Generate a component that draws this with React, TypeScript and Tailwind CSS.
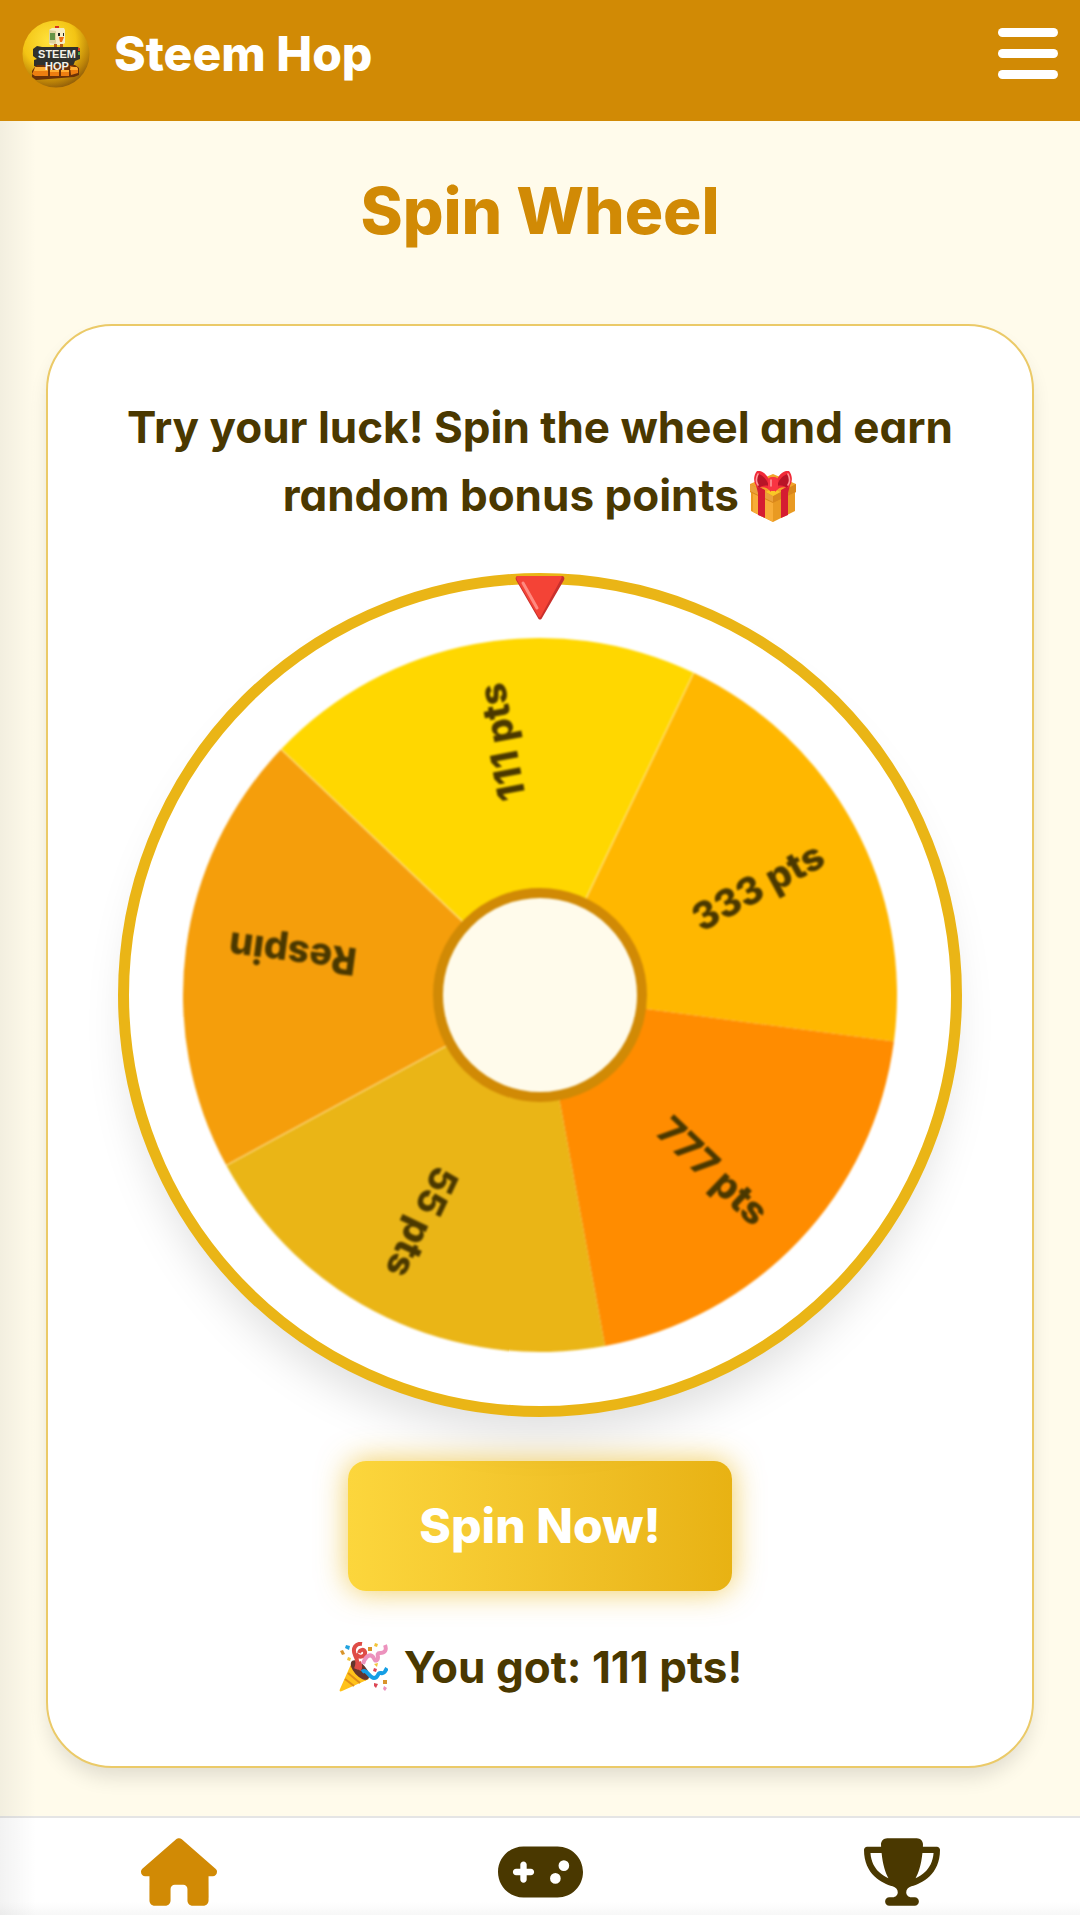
import React from "react";
import { FaHouse, FaGamepad, FaTrophy } from "react-icons/fa6";

const segments = [
  { label: "111 pts", color: "#ffd700" },
  { label: "333 pts", color: "#ffb700" },
  { label: "777 pts", color: "#ff8c00" },
  { label: "55 pts", color: "#eab516" },
  { label: "Respin", color: "#f59e0b" },
];

const START = -136.5;
const STEP = 72;

function point(angle: number, r: number) {
  const a = (angle * Math.PI) / 180;
  return `${(411 + r * Math.cos(a)).toFixed(2)} ${(411 + r * Math.sin(a)).toFixed(2)}`;
}

function Logo() {
  return (
    <svg viewBox="0 0 68 68" className="size-[68px]" role="img" aria-label="Steem Hop logo">
      <defs>
        <radialGradient id="ball" cx="0.4" cy="0.3" r="0.72">
          <stop offset="0" stopColor="#ffe23c" />
          <stop offset="0.55" stopColor="#f3c414" />
          <stop offset="0.85" stopColor="#bd8408" />
          <stop offset="1" stopColor="#946009" />
        </radialGradient>
      </defs>
      <circle cx="34" cy="34" r="33.5" fill="url(#ball)" />
      <path d="M33 6h4v4h-4z" fill="#d8301c" />
      <path d="M27 10l3-2h12l1 2v13l-3 2H28l-1-2z" fill="#f5ecc4" />
      <path d="M27 10l7 1v13l-7-1z" fill="#ded39c" />
      <path d="M28 13h5v7h-5z" fill="#659447" />
      <path d="M36 13h2v3h-2zM41 13h1v3h-1z" fill="#222" />
      <path d="M37 17h5l-2 5h-2z" fill="#ee6c12" />
      <path d="M32 24h3v4h-3zM38 24h3v4h-3z" fill="#b55b12" />
      <path d="M11 29l4-3 5 1h36l2 3v9l-5 2-3 8H22l-10-3v-6l3-1-4-3z" fill="#30312c" />
      <path d="M56 28h2v3h-2z" fill="#df3a1e" />
      <path d="M56 32h2v3h-2z" fill="#50a342" />
      <path d="M12 48l3-3h38l4 3v7l-5 2-38 3-4-3v-6z" fill="#6b3107" />
      <path d="M13 48h11l2 3v5H13l-3-2zM28 51h9v5h-9zM39 51h8v5h-8zM48 46l8 2v5l-7 2z" fill="#ed7e10" />
      <path d="M13 47h12l1 4H12zM28 50h9v2h-9zM39 50h8v2h-8zM49 47h6l1 3h-8z" fill="#ffaf33" />
      <g fill="#f4f2e8" textAnchor="middle" fontFamily="Liberation Sans" fontWeight="700">
        <text x="35" y="38" fontSize="11">STEEM</text>
        <text x="35" y="50" fontSize="11">HOP</text>
      </g>
    </svg>
  );
}

function Gift() {
  return (
    <svg viewBox="0 0 48 52" className="inline-block h-[52px] w-12 align-[-12px]" role="img" aria-label="gift">
      <path d="M2 19L24 5l22 14v21L24 51 2 40z" fill="#e99a22" />
      <path d="M24 27v24L4 41V21z" fill="#f8ad38" />
      <path d="M1 13L24 3l23 10v8L24 32 1 21z" fill="#f2a42b" />
      <path d="M1 13l23 12 23-12v8L24 32 1 21z" fill="#d9871b" />
      <path d="M1 13l23 12v6L1 20z" fill="#eba13a" />
      <path d="M7 14l9 5v28l-7-3V22zM41 14l-9 5v28l7-3V22z" fill="#d51c32" />
      <path d="M24 17l7 4-7 4-7-4z" fill="#f9c827" />
      <path d="M22 12c-4-9-9-13-14-12-4 5-4 12 1 17 6-2 10 0 13 4zM26 12c4-9 9-13 14-12 4 5 4 12-1 17-6-2-10 0-13 4z" fill="#f12a38" />
      <path d="M10 3c6 3 8 6 10 12-5-1-8 0-10 2-3-4-3-10 0-14zM38 3c-6 3-8 6-10 12 5-1 8 0 10 2 3-4 3-10 0-14z" fill="#b81427" />
      <path d="M9 3c-2 4-2 8 0 11M39 3c2 4 2 8 0 11" fill="none" stroke="#ff999a" strokeWidth="1.6" strokeLinecap="round" />
      <rect x="19" y="6" width="10" height="14" rx="4" fill="#f83442" />
      <path d="M22 9v6" stroke="#ff9a9c" strokeWidth="1.5" strokeLinecap="round" />
    </svg>
  );
}

function Popper() {
  return (
    <svg viewBox="0 0 48 50" className="size-[50px]" role="img" aria-label="party popper">
      <path d="M13 20L1 47c-1 2 0 3 2 2l27-12z" fill="#ffc21a" />
      <path d="M9 31l12 10M6 37l9 7M12 24l15 14" stroke="#df8e18" strokeWidth="2" />
      <ellipse cx="21" cy="28" rx="6" ry="12" transform="rotate(-42 21 28)" fill="#64352b" />
      <path d="M17 27c2-5 2-8-1-14C13 6 17 1 23 2M17 12c4 5 10 2 9-2-1-3-5-3-6 1M20 28c2-3 1-6 0-8" fill="none" stroke="#df4c46" strokeWidth="4" />
      <path d="M24 22c2-7 6-10 9-8s2 6 5 4-2-7 3-7 7-3 5-8" fill="none" stroke="#ec92bd" strokeWidth="4" />
      <path d="M23 30c5-4 7 6 12 6s3-6 7-5 4-2 6-5" fill="none" stroke="#159ee5" strokeWidth="4" />
      <path d="M7 3l4 1-1 4-4-2z" fill="#21a2df" />
      <path d="M1 9l3-1 2 4-3 1zM29 5h4v4h-4zM44 38h4v4h-4z" fill="#d9942b" />
      <path d="M9 15l3 1-1 3-3-1zM36 1l3 1-1 3-3-1zM35 22l4-1-1 4z" fill="#f2c338" />
      <path d="M35 26l3 1-1 3-3-1zM35 41l4 1-2 4-2-2z" fill="#dc4754" />
      <path d="M45 44l3 2-2 3-2-2z" fill="#ec92bd" />
    </svg>
  );
}

function Pointer() {
  return (
    <svg viewBox="0 0 50 46" className="absolute left-1/2 top-[-9px] z-10 h-[46px] w-[50px] -translate-x-1/2" aria-hidden="true">
      <path d="M3 1h44c2 0 3 2 2 4L27 43c-1 2-3 2-4 0L1 5C0 3 1 1 3 1z" fill="#c9302c" />
      <path d="M3 1h43c1 0 1 1 0 3L26 41c-1 2-2 2-3 0L2 5C1 3 1 1 3 1z" fill="#f44336" />
      <path d="M8 8l14 25" stroke="#ff8a80" strokeWidth="3" strokeLinecap="round" />
    </svg>
  );
}

function Wheel() {
  return (
    <div className="relative aspect-square w-full max-w-[844px] rounded-full border-[11px] border-[#eab516] bg-white shadow-[0_30px_46px_-12px_rgba(0,0,0,0.13)]">
      <Pointer />
      <svg viewBox="0 0 822 822" className="size-full" role="img" aria-label="Prize wheel">
        <g className="blur-[1px]">
          {segments.map((s, i) => (
            <path
              key={s.label}
              d={`M411 411L${point(START + i * STEP, 357)}A357 357 0 0 1 ${point(START + (i + 1) * STEP, 357)}Z`}
              fill={s.color}
            />
          ))}
          {[0, 1, 4].map((i) => (
            <path
              key={i}
              d={`M${point(START + i * STEP, 107)}L${point(START + i * STEP, 357)}`}
              stroke="#ffe9a8"
              strokeOpacity="0.6"
              strokeWidth="1.5"
            />
          ))}
          <circle cx="411" cy="411" r="102" fill="#fffbeb" stroke="#d18a05" strokeWidth="10" />
          {segments.map((s, i) => (
            <text
              key={s.label}
              x="315"
              y="22"
              textAnchor="end"
              transform={`translate(411 411) rotate(${START + (i + 0.5) * STEP})`}
              fill="#4a3800"
              fontSize="38"
              className="font-extrabold"
            >
              {s.label}
            </text>
          ))}
        </g>
      </svg>
    </div>
  );
}

export default function App() {
  return (
    <div className="relative flex min-h-screen flex-col bg-[#fffbeb] font-['Inter','Noto_Sans',sans-serif] font-bold text-[#4a3800] [font-feature-settings:'cv11']">
      <header className="flex h-[121px] items-center justify-between bg-[#d18a05] px-[22px] pb-[14px] text-white">
        <a href="#home" className="flex items-center gap-6">
          <Logo />
          <span className="text-[48px] font-extrabold leading-[64px]">Steem Hop</span>
        </a>
        <button type="button" aria-label="Open menu">
          <svg viewBox="0 0 60 52" className="h-[52px] w-[60px]" fill="currentColor" aria-hidden="true">
            <rect y="0" width="60" height="9" rx="4.5" />
            <rect y="21" width="60" height="9" rx="4.5" />
            <rect y="42" width="60" height="9" rx="4.5" />
          </svg>
        </button>
      </header>

      <main className="flex grow flex-col px-[46px] pb-12">
        <h1 className="pb-16 pt-10 text-center text-[64px] font-extrabold leading-[99px] text-[#d18a05]">Spin Wheel</h1>
        <section className="flex flex-col items-center gap-11 rounded-[66px] border-2 border-[#ebca68] bg-white px-14 py-[67px] shadow-[0_12px_20px_-3px_rgba(0,0,0,0.12)]">
          <p className="text-center text-[44px] leading-[68px]">
            Try your luck! Spin the wheel and earn random bonus points <Gift />
          </p>
          <Wheel />
          <button
            type="button"
            className="rounded-[18px] bg-linear-to-r from-[#fcd63c] to-[#e8b213] px-[71px] py-8 text-[48px] font-extrabold leading-[66px] text-white shadow-[0_0_30px_rgba(234,181,22,0.7)]"
          >
            Spin Now!
          </button>
          <p className="flex items-center gap-4 text-[44px] leading-[64px]" role="status">
            <Popper />
            You got: 111 pts!
          </p>
        </section>
      </main>

      <nav className="flex h-[101px] items-start justify-around border-t-2 border-[#e5e5e5] bg-linear-to-b from-white from-85% to-[#f6f6f6] pt-5">
        <a href="#home" aria-label="Home" className="text-[#d18a05]">
          <FaHouse className="h-[68px] w-[76px]" />
        </a>
        <a href="#games" aria-label="Games">
          <FaGamepad className="h-[68px] w-[85px]" />
        </a>
        <a href="#leaderboard" aria-label="Leaderboard">
          <FaTrophy className="h-[68px] w-[76px]" />
        </a>
      </nav>
      <div className="pointer-events-none absolute bottom-0 left-0 top-[121px] w-9 bg-linear-to-r from-black/5 to-transparent" />
    </div>
  );
}
